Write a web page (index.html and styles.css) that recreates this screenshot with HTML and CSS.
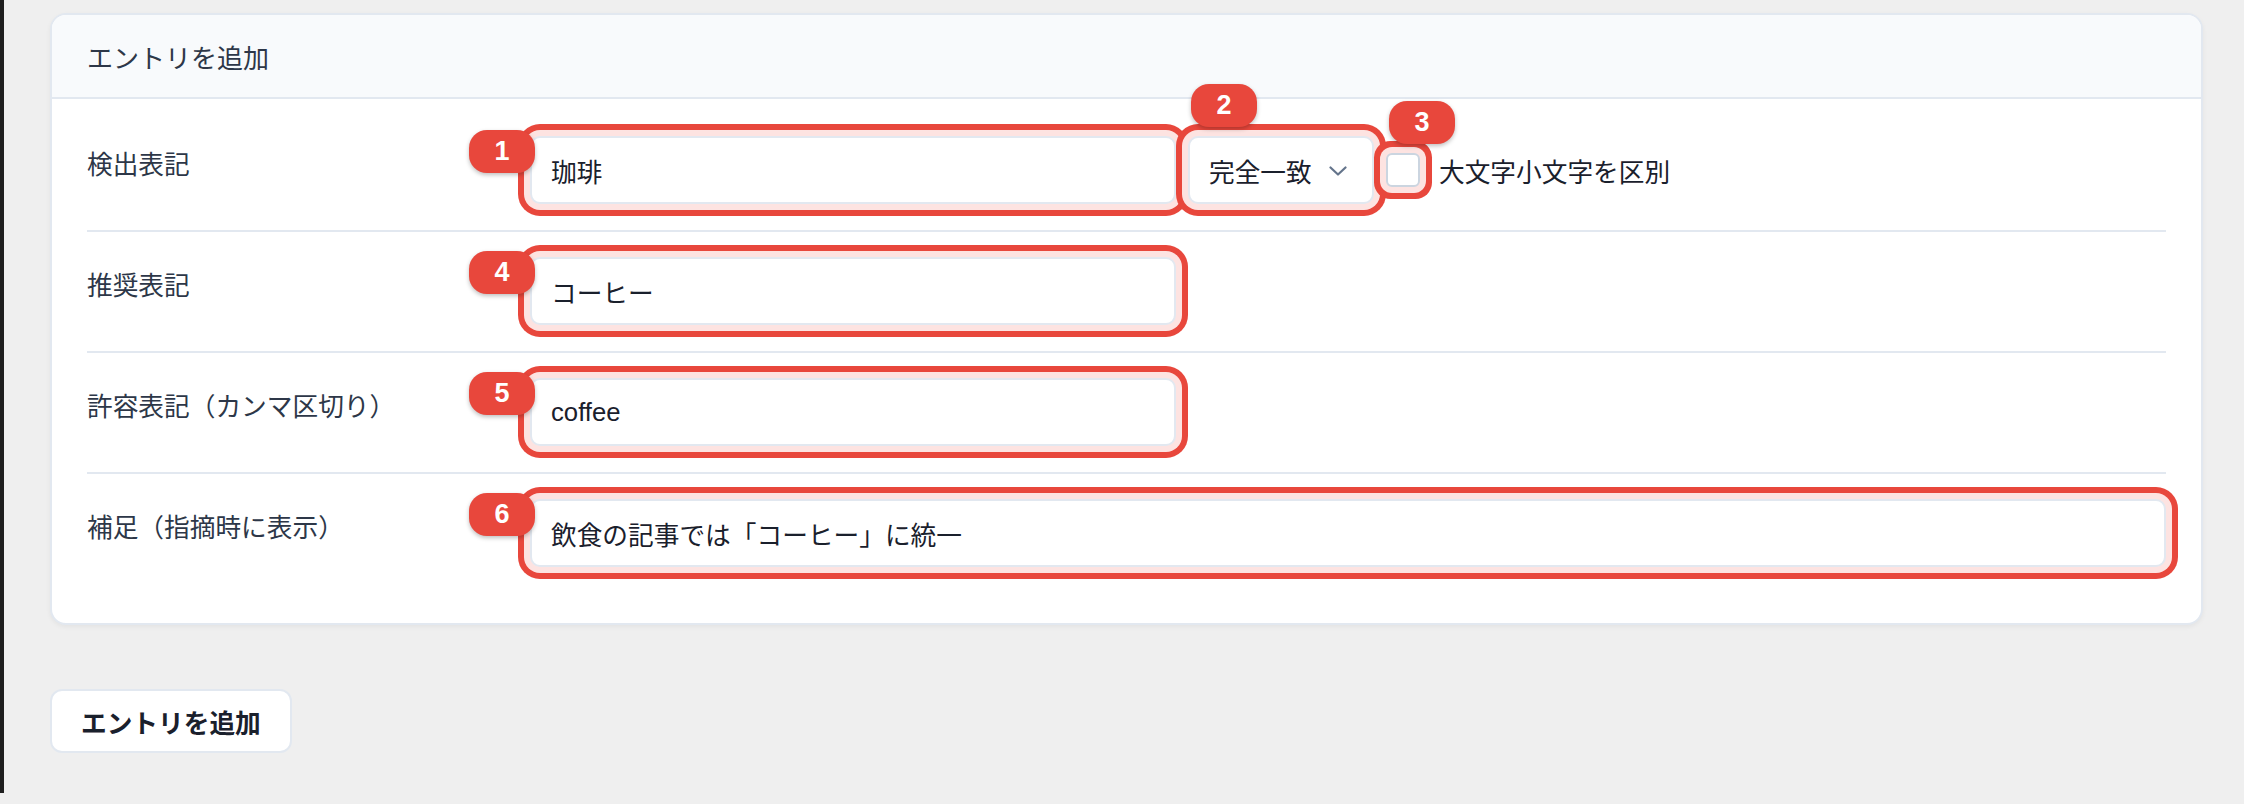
FILE: index.html
```html
<!DOCTYPE html>
<html lang="ja">
<head>
  <meta charset="UTF-8">
  <meta name="viewport" content="width=device-width, initial-scale=1.0">
  <title>エントリを追加</title>
  <link rel="stylesheet" href="styles.css">
</head>

<body>
  <div class="edge"></div>

  <main class="page">
    <section class="card">
      <div class="card-header">エントリを追加</div>

      <div class="card-body">
        <!-- 検出表記 -->
        <div class="form-row">
          <label class="form-label" for="detect">検出表記</label>
          <div class="form-field">
            <span class="mark">
              <input type="text" id="detect" class="form-input ring" value="珈琲">
              <span class="badge badge-left">1</span>
            </span>
            <span class="mark">
              <div class="select ring">
                <span>完全一致</span>
                <svg class="chevron" width="18" height="10" viewBox="0 0 18 10">
                  <polyline points="1.5 1.5 9 8.5 16.5 1.5" fill="none" stroke="#64748b" stroke-width="2.2" stroke-linecap="round" stroke-linejoin="round"/>
                </svg>
              </div>
              <span class="badge badge-top">2</span>
            </span>
            <span class="mark">
              <input type="checkbox" id="case" class="checkbox ring">
              <span class="badge badge-top">3</span>
            </span>
            <label class="check-label" for="case">大文字小文字を区別</label>
          </div>
        </div>

        <!-- 推奨表記 -->
        <div class="form-row">
          <label class="form-label" for="preferred">推奨表記</label>
          <div class="form-field">
            <span class="mark">
              <input type="text" id="preferred" class="form-input ring" value="コーヒー">
              <span class="badge badge-left">4</span>
            </span>
          </div>
        </div>

        <!-- 許容表記 -->
        <div class="form-row">
          <label class="form-label" for="allowed">許容表記（カンマ区切り）</label>
          <div class="form-field">
            <span class="mark">
              <input type="text" id="allowed" class="form-input ring" value="coffee">
              <span class="badge badge-left">5</span>
            </span>
          </div>
        </div>

        <!-- 補足 -->
        <div class="form-row">
          <label class="form-label" for="note">補足（指摘時に表示）</label>
          <div class="form-field">
            <span class="mark mark-wide">
              <input type="text" id="note" class="form-input form-input-wide ring" value="飲食の記事では「コーヒー」に統一">
              <span class="badge badge-left">6</span>
            </span>
          </div>
        </div>
      </div>
    </section>

    <button type="button" class="add-button">エントリを追加</button>
  </main>
</body>
</html>
```

FILE: styles.css
```css
:root {
  --bg: #efefef;
  --card-bg: #ffffff;
  --header-bg: #f8fafc;
  --border: #e2e8f0;
  --text: #1a202c;
  --label: #2d3748;
  --muted: #64748b;
  --mark: #e8473c;
  --mark-soft: #fde3e1;
}

* {
  margin: 0;
  padding: 0;
  box-sizing: border-box;
}

body {
  font-family: "Liberation Sans", "Noto Sans CJK JP", sans-serif;
  font-size: 25.7px;
  background: var(--bg);
  color: var(--text);
  display: flex;
  align-items: flex-start;
  min-height: 804px;
}

.edge {
  width: 4px;
  height: 793px;
  background: #1e1e1e;
  flex-shrink: 0;
}

.page {
  flex: 1;
  padding: 13px 41px 0 46px;
}

.card {
  background: var(--card-bg);
  border: 2px solid var(--border);
  border-radius: 16px;
  box-shadow: 0 2px 5px rgba(0, 0, 0, 0.05);
}

.card-header {
  height: 84px;
  display: flex;
  align-items: center;
  padding: 0 35px;
  background: var(--header-bg);
  border-bottom: 2px solid var(--border);
  border-radius: 14px 14px 0 0;
  color: var(--label);
  font-size: 26px;
}

.card-body {
  padding: 12px 35px 30px;
}

.form-row {
  display: flex;
  align-items: flex-start;
  padding: 25px 0 26px;
  border-bottom: 2px solid var(--border);
}

.form-row:last-child {
  border-bottom: none;
}

.form-label {
  width: 443px;
  flex-shrink: 0;
  padding-top: 10px;
  line-height: 1.5;
  color: var(--label);
}

.form-field {
  flex: 1;
  display: flex;
  align-items: center;
  gap: 12px;
}

/* 注釈の枠と番号 */
.mark {
  position: relative;
  display: inline-flex;
}

.mark-wide {
  flex: 1;
}

.ring {
  box-shadow: 0 0 0 6px var(--mark-soft), 0 0 0 12px var(--mark);
}

.badge {
  position: absolute;
  z-index: 2;
  width: 66px;
  height: 43px;
  display: flex;
  align-items: center;
  justify-content: center;
  background: var(--mark);
  border-radius: 18px;
  color: #fff;
  font-weight: 700;
  font-size: 27px;
  box-shadow: 0 2px 4px rgba(0, 0, 0, 0.25);
}

.badge-left {
  left: -61px;
  top: -6px;
}

.badge-top {
  left: 3px;
  top: -52px;
}

.form-input {
  width: 646px;
  height: 68px;
  border: 2px solid var(--border);
  border-radius: 10px;
  padding: 0 19px;
  background: #fff;
  color: var(--text);
  font-family: inherit;
  font-size: 25.7px;
  outline: none;
}

.form-input-wide {
  width: 100%;
}

.select {
  width: 186px;
  height: 68px;
  display: flex;
  align-items: center;
  justify-content: space-between;
  padding: 0 25px 0 19px;
  border: 2px solid var(--border);
  border-radius: 10px;
  background: #fff;
  color: var(--text);
}

.chevron {
  display: block;
  margin-top: 2px;
}

.checkbox {
  appearance: none;
  -webkit-appearance: none;
  width: 34px;
  height: 34px;
  border: 2px solid #cbd5e0;
  border-radius: 6px;
  background: #fff;
  margin: 0;
}

.check-label {
  margin-left: 7px;
  color: var(--text);
}

.add-button {
  margin-top: 64px;
  height: 64px;
  padding: 0 29px;
  background: #fff;
  border: 2px solid var(--border);
  border-radius: 12px;
  color: var(--text);
  font-family: inherit;
  font-size: 25.7px;
  font-weight: 700;
  cursor: pointer;
}
```
